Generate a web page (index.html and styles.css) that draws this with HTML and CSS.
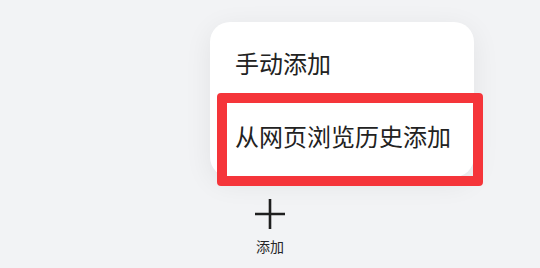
FILE: index.html
```html
<!DOCTYPE html>
<html lang="zh-CN">
<head>
    <meta charset="UTF-8">
    <meta name="viewport" content="width=device-width, initial-scale=1.0">
    <title>添加</title>
    <link rel="stylesheet" href="styles.css">
</head>
<body>

<div class="page">
    <div class="menu">
        <div class="menu-item">手动添加</div>
        <div class="menu-item">从网页浏览历史添加</div>
        <div class="highlight"></div>
    </div>

    <div class="add">
        <svg class="add-icon" width="30" height="30" viewBox="0 0 30 30">
            <path d="M0 15 H30 M15 0 V30" stroke="#1f1f1f" stroke-width="2.6" fill="none"/>
        </svg>
        <div class="add-label">添加</div>
    </div>
</div>

</body>
</html>
```

FILE: styles.css
```css
body {
    margin: 0;
    background-color: #f2f3f5;
    font-family: "Noto Sans CJK SC", "Noto Sans", sans-serif;
    color: #222;
}
.page {
    height: 268px;
    box-sizing: border-box;
    padding: 22px 0 0 210px;
}
.menu {
    position: relative;
    width: 264px;
    height: 155px;
    box-sizing: border-box;
    padding-top: 5px;
    background-color: #fff;
    border-radius: 20px;
    box-shadow: 0 6px 28px rgba(0, 0, 0, 0.07);
}
.menu-item {
    height: 71px;
    display: flex;
    align-items: center;
    padding-left: 25px;
    font-size: 24px;
}
.menu-item + .menu-item {
    height: 74px;
}
.highlight {
    position: absolute;
    left: 7px;
    top: 71px;
    width: 266px;
    height: 93px;
    box-sizing: border-box;
    border: 10px solid #f5353a;
    border-radius: 4px;
}
.add {
    width: 60px;
    margin: 22px 0 0 30px;
    display: flex;
    flex-direction: column;
    align-items: center;
}
.add-icon {
    display: block;
}
.add-label {
    margin-top: 8px;
    font-size: 14px;
    line-height: 18px;
    color: #262626;
}
```
